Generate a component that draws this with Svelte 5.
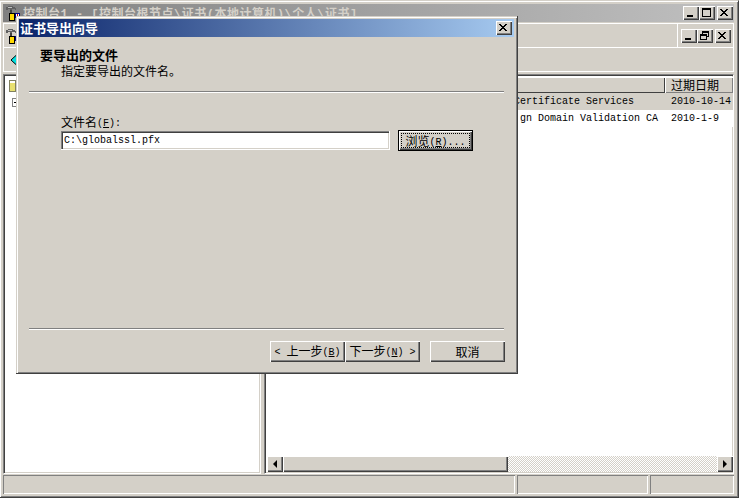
<script>
  let certs = [
    { issuer: 'Certificate Services', expires: '2010-10-14', selected: true },
    { issuer: ' gn Domain Validation CA', expires: '2010-1-9', selected: false }
  ];
</script>

{#snippet hammer()}
  <svg class="appicon" width="16" height="16" viewBox="0 0 16 16" shape-rendering="crispEdges">
    <path d="M1 2h2V1h5v1h2v1h1v2h-1V4H7v1H5V4H3v1H1z" fill="#606060" />
    <path d="M3 2h4v1H3z" fill="#c0c0c0" />
    <rect x="5" y="5" width="2" height="3" fill="#404040" />
    <rect x="4" y="8" width="6" height="8" fill="#000" />
    <rect x="5" y="9" width="4" height="6" fill="#ffd800" />
    <rect x="10" y="8" width="5" height="5" fill="#000082" />
    <rect x="11" y="9" width="3" height="3" fill="#fff" />
    <rect x="12" y="9" width="1" height="3" fill="#c00000" />
  </svg>
{/snippet}

{#snippet xicon()}
  <svg class="gl" width="8" height="7" viewBox="0 0 8 7" shape-rendering="crispEdges">
    <path d="M0 0h2v1h1v1h2V1h1V0h2v1H7v1H6v1H5v1h1v1h1v1h1v1H6V6H5V5H3v1H2v1H0V6h1V5h1V4h1V3H2V2H1V1H0z" fill="#000" />
  </svg>
{/snippet}

<div class="window">
  <div class="titlebar">
    {@render hammer()}
    <span class="apptitle">控制台1 - [控制台根节点\证书(本地计算机)\个人\证书]</span>
    <div class="caption-btns">
      <button class="cap"><i class="gl-min"></i></button>
      <button class="cap"><i class="gl-max"></i></button>
      <button class="cap gap">{@render xicon()}</button>
    </div>
  </div>

  <div class="menubar">
    <div class="menu-left">
      {@render hammer()}
    </div>
    <div class="menu-right">
      <button class="cap"><i class="gl-min"></i></button>
      <button class="cap">
        <svg class="gl gl-restore" width="9" height="9" viewBox="0 0 9 9" shape-rendering="crispEdges">
          <path d="M2 0h7v6H7V5h1V2H3v1H2z" fill="#000" />
          <path d="M0 3h7v6H0zM1 5v3h5V5z" fill="#000" fill-rule="evenodd" />
        </svg>
      </button>
      <button class="cap gap">{@render xicon()}</button>
    </div>
  </div>

  <div class="toolbar">
    <svg width="8" height="12" viewBox="0 0 8 12"><path d="M7 0.5V11.5L1 6z" fill="#00e0e0" stroke="#000" /></svg>
  </div>

  <div class="panes">
    <div class="pane left">
      <div class="tree-head">
        <svg width="7" height="12" viewBox="0 0 7 12" shape-rendering="crispEdges">
          <rect width="7" height="12" fill="#808060" />
          <rect x="1" y="1" width="5" height="10" fill="#e8e070" />
          <rect x="1" y="1" width="5" height="2" fill="#fff" />
        </svg>
      </div>
      <div class="tree-row"><span class="expander"><i></i></span></div>
    </div>
    <div class="pane right">
      <div class="list">
        <div class="list-head">
          <div class="col grow"></div>
          <div class="col">过期日期</div>
        </div>
        {#each certs as cert}
          <div class="row" class:selected={cert.selected}>
            <span class="issuer">{cert.issuer}</span>
            <span class="expires">{cert.expires}</span>
          </div>
        {/each}
      </div>
      <div class="hscroll">
        <button class="sb"><i class="tri-l"></i></button>
        <div class="thumb"></div>
        <div class="track"></div>
        <button class="sb"><i class="tri-r"></i></button>
      </div>
    </div>
  </div>

  <div class="statusbar">
    <div class="seg s1"></div>
    <div class="seg s2"></div>
    <div class="seg s3"></div>
  </div>

  <div class="dialog">
    <div class="dlg-title">
      <span>证书导出向导</span>
      <button class="cap">{@render xicon()}</button>
    </div>
    <div class="dlg-head">
      <div class="h1">要导出的文件</div>
      <div class="h2">指定要导出的文件名。</div>
    </div>
    <div class="sep"></div>
    <div class="dlg-body">
      <label for="fname">文件名<span class="lat">(<u>F</u>):</span></label>
      <div class="file-row">
        <input id="fname" type="text" value={'C:\\globalssl.pfx'} />
        <button class="btn browse"><span class="focus">浏览<span class="lat">(<u>R</u>)...</span></span></button>
      </div>
    </div>
    <div class="sep"></div>
    <div class="dlg-foot">
      <button class="btn back"><span class="lat">&lt;&nbsp;</span>上一步<span class="lat">(<u>B</u>)</span></button>
      <button class="btn next">下一步<span class="lat">(<u>N</u>)&nbsp;&gt;</span></button>
      <button class="btn cancel">取消</button>
    </div>
  </div>
</div>

<style>
  :global(body) {
    margin: 0;
    background: #fff;
  }

  button {
    padding: 0;
    margin: 0;
    font: inherit;
    color: #000;
  }

  .window {
    position: relative;
    width: 739px;
    height: 498px;
    box-sizing: border-box;
    overflow: hidden;
    display: flex;
    flex-direction: column;
    background: #d4d0c8;
    padding: 4px 4px 3px 3px;
    border-top: 1px solid #d4d0c8;
    border-right: 1px solid #404040;
    border-bottom: 1px solid #404040;
    box-shadow: inset 1px 1px 0 #fff, inset -1px -1px 0 #808080;
    font-family: "Noto Sans CJK SC", sans-serif;
    font-size: 12px;
    color: #000;
  }

  .titlebar {
    height: 18px;
    flex: none;
    display: flex;
    align-items: center;
    background: linear-gradient(to right, #808080, #c0c0c0);
    padding: 0 1px 0 2px;
    margin-top: -1px;
  }

  .appicon {
    flex: none;
    margin-right: 2px;
  }

  .apptitle {
    font-family: "Liberation Mono", "Noto Sans CJK SC", monospace;
    font-size: 12px;
    font-weight: bold;
    letter-spacing: .5px;
    color: #d4d0c8;
    white-space: nowrap;
  }

  .caption-btns {
    margin-left: auto;
    display: flex;
  }

  .cap {
    width: 16px;
    height: 14px;
    box-sizing: border-box;
    background: #d4d0c8;
    border: 0;
    position: relative;
    box-shadow: inset 1px 1px 0 #fff, inset -1px -1px 0 #404040, inset -2px -2px 0 #808080;
    flex: none;
    display: block;
  }

  .cap.gap {
    margin-left: 2px;
  }

  .cap i,
  .gl {
    position: absolute;
    display: block;
    left: 3px;
    top: 3px;
  }

  .gl-min {
    left: 4px !important;
    top: 9px !important;
    width: 6px;
    height: 2px;
    background: #000;
  }

  .gl-max {
    top: 2px !important;
    width: 9px;
    height: 9px;
    box-sizing: border-box;
    border: 1px solid #000;
    border-top-width: 2px;
  }

  .gl-restore {
    top: 2px;
  }

  .menubar {
    height: 25px;
    flex: none;
    display: flex;
    margin-top: 1px;
  }

  .menu-left {
    flex: 1;
    display: flex;
    align-items: center;
    box-sizing: border-box;
    padding-left: 2px;
    box-shadow: inset 1px 1px 0 #fff, inset -1px -1px 0 #fff, inset 0 -1px 0 #fff;
  }

  .menu-right {
    width: 56px;
    box-sizing: border-box;
    display: flex;
    align-items: center;
    padding: 1px 0 0 3px;
    box-shadow: inset 0 1px 0 #fff, inset 0 -1px 0 #fff, inset -1px 0 0 #fff;
  }

  .toolbar {
    height: 24px;
    flex: none;
    box-sizing: border-box;
    display: flex;
    align-items: center;
    padding-left: 7px;
    box-shadow: inset 1px 0 0 #fff, inset -1px 0 0 #fff, inset 0 -1px 0 #fff;
  }

  .panes {
    flex: 1;
    min-height: 0;
    display: flex;
    gap: 3px;
    margin-top: 2px;
  }

  .pane {
    display: flex;
    flex-direction: column;
    box-sizing: border-box;
    background: #fff;
    border: 1px solid #808080;
    border-right-color: #fff;
    border-bottom-color: #fff;
    box-shadow: inset 1px 1px 0 #404040, inset -1px -1px 0 #d4d0c8;
  }

  .pane.left {
    width: 258px;
    padding: 2px;
  }

  .pane.right {
    flex: 1;
    min-width: 0;
    padding: 2px 0 1px 2px;
  }

  .tree-head {
    height: 16px;
    padding: 1px 0 0 3px;
    box-sizing: border-box;
  }

  .tree-row {
    padding: 5px 0 0 6px;
  }

  .expander {
    display: block;
    position: relative;
    width: 9px;
    height: 9px;
    box-sizing: border-box;
    border: 1px solid #808080;
  }

  .expander i {
    position: absolute;
    left: 1px;
    top: 3px;
    width: 5px;
    height: 1px;
    background: #000;
  }

  .list {
    flex: 1;
    min-height: 0;
  }

  .list-head {
    height: 16px;
    display: flex;
    background: #d4d0c8;
  }

  .col {
    box-sizing: border-box;
    width: 68px;
    line-height: 15px;
    padding-left: 6px;
    box-shadow: inset 1px 1px 0 #fff, inset -1px -1px 0 #808080;
    white-space: nowrap;
  }

  .col.grow {
    flex: 1;
    box-shadow: inset 1px 1px 0 #fff, inset -1px -1px 0 #404040;
  }

  .row {
    height: 17px;
    display: flex;
    align-items: center;
    font-family: "Liberation Mono", monospace;
    font-size: 10px;
    white-space: pre;
    background: #fff;
  }

  .row.selected {
    background: #d4d0c8;
  }

  .issuer {
    flex: 1;
    padding-left: 247px;
    overflow: hidden;
  }

  .expires {
    width: 62px;
    flex: none;
  }

  .hscroll {
    height: 16px;
    flex: none;
    display: flex;
  }

  .sb,
  .thumb {
    box-sizing: border-box;
    background: #d4d0c8;
    border: 0;
    box-shadow: inset 1px 1px 0 #fff, inset -1px -1px 0 #404040, inset -2px -2px 0 #808080;
  }

  .sb {
    width: 16px;
    height: 16px;
    flex: none;
    display: flex;
    align-items: center;
    justify-content: center;
  }

  .thumb {
    width: 225px;
    flex: none;
  }

  .track {
    flex: 1;
    background: repeating-conic-gradient(#d4d0c8 0 25%, #fff 0 50%) 0 0 / 2px 2px;
  }

  .tri-l,
  .tri-r {
    display: block;
    width: 0;
    height: 0;
    border-top: 4px solid transparent;
    border-bottom: 4px solid transparent;
  }

  .tri-l {
    border-right: 4px solid #000;
  }

  .tri-r {
    border-left: 4px solid #000;
  }

  .statusbar {
    height: 19px;
    flex: none;
    display: flex;
    gap: 2px;
    margin-top: 1px;
  }

  .seg {
    box-sizing: border-box;
    box-shadow: inset 1px 1px 0 #808080, inset -1px -1px 0 #fff;
  }

  .s1 {
    width: 512px;
  }

  .s2 {
    width: 131px;
  }

  .s3 {
    flex: 1;
  }

  .dialog {
    position: absolute;
    left: 16px;
    top: 15px;
    width: 502px;
    height: 358px;
    box-sizing: border-box;
    padding: 3px;
    background: #d4d0c8;
    border-right: 1px solid #404040;
    border-bottom: 1px solid #404040;
    box-shadow: inset 1px 1px 0 #d4d0c8, inset 2px 2px 0 #fff, inset -1px -1px 0 #808080;
    display: flex;
    flex-direction: column;
  }

  .dlg-title {
    height: 18px;
    flex: none;
    display: flex;
    align-items: center;
    justify-content: space-between;
    padding: 0 2px 0 1px;
    background: linear-gradient(to right, #0a246a, #a6caf0);
    color: #fff;
    font-weight: bold;
    font-size: 13px;
    line-height: 18px;
  }

  .dlg-head {
    height: 54px;
    flex: none;
    box-sizing: border-box;
    padding: 11px 0 0 21px;
  }

  .h1 {
    font-weight: bold;
    font-size: 13px;
    line-height: 14px;
  }

  .h2 {
    margin-top: 1px;
    padding-left: 21px;
    line-height: 15px;
  }

  .sep {
    flex: none;
    height: 2px;
    margin: 0 10px;
    background: linear-gradient(#808080 50%, #fff 50%);
  }

  .dlg-body {
    flex: 1;
    min-height: 0;
    box-sizing: border-box;
    padding: 21px 0 0 42px;
  }

  label {
    display: block;
    height: 16px;
    line-height: 16px;
  }

  .lat {
    font-family: "Liberation Mono", monospace;
    font-size: 10px;
    white-space: pre;
    vertical-align: 1px;
  }

  .file-row {
    display: flex;
    align-items: center;
  }

  input {
    width: 329px;
    height: 19px;
    box-sizing: border-box;
    padding: 0 2px 0 3px;
    border: 0;
    border-right: 1px solid #fff;
    border-bottom: 1px solid #fff;
    outline: 0;
    background: #fff;
    box-shadow: inset 1px 1px 0 #808080, inset 2px 2px 0 #404040, inset -1px -1px 0 #d4d0c8;
    font-family: "Liberation Mono", monospace;
    font-size: 10px;
    color: #000;
  }

  .btn {
    box-sizing: border-box;
    height: 21px;
    background: #d4d0c8;
    border: 0;
    box-shadow: inset 1px 1px 0 #fff, inset -1px -1px 0 #404040, inset -2px -2px 0 #808080;
    white-space: nowrap;
    line-height: 19px;
  }

  .browse {
    width: 75px;
    margin-left: 8px;
    padding: 3px;
    box-shadow: inset 0 0 0 1px #000, inset 2px 2px 0 #fff, inset -2px -2px 0 #404040, inset -3px -3px 0 #808080;
    line-height: 13px;
  }

  .focus {
    display: block;
    height: 15px;
    box-sizing: border-box;
    border: 1px dotted #000;
    text-align: center;
  }

  .dlg-foot {
    height: 40px;
    flex: none;
    box-sizing: border-box;
    display: flex;
    align-items: flex-start;
    padding: 11px 0 0 251px;
  }

  .back,
  .next {
    width: 75px;
  }

  .cancel {
    width: 75px;
    margin-left: 10px;
  }
</style>
